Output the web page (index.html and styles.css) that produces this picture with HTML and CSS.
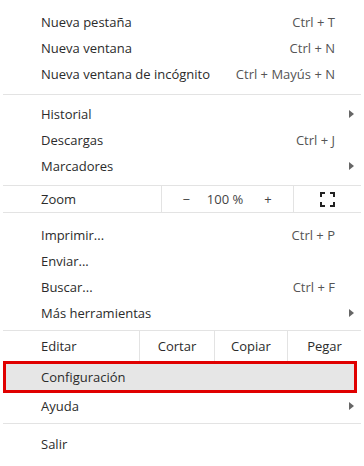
FILE: index.html
```html
<!DOCTYPE html>
<html lang="es">
<head>
<meta charset="utf-8">
<link rel="stylesheet" href="styles.css">
</head>
<body>
<div class="menu">
  <div class="group g1">
    <div class="item"><span class="label">Nueva pestaña</span><span class="key">Ctrl + T</span></div>
    <div class="item"><span class="label">Nueva ventana</span><span class="key">Ctrl + N</span></div>
    <div class="item"><span class="label">Nueva ventana de incógnito</span><span class="key">Ctrl + Mayús + N</span></div>
  </div>
  <div class="sep s1"></div>
  <div class="group">
    <div class="item"><span class="label">Historial</span><span class="arrow"></span></div>
    <div class="item"><span class="label">Descargas</span><span class="key">Ctrl + J</span></div>
    <div class="item"><span class="label">Marcadores</span><span class="arrow"></span></div>
  </div>
  <div class="zoomrow">
    <span class="label zl">Zoom</span>
    <div class="zctrl">
      <span class="zminus">−</span>
      <span class="zval">100 %</span>
      <span class="zplus">+</span>
    </div>
    <div class="zfull">
      <svg width="15" height="15" viewBox="0 0 15 15" fill="none" stroke="#222" stroke-width="2">
        <path d="M1 5V1h4"/><path d="M10 1h4v4"/><path d="M14 10v4h-4"/><path d="M5 14H1v-4"/>
      </svg>
    </div>
  </div>
  <div class="group g3">
    <div class="item"><span class="label">Imprimir...</span><span class="key">Ctrl + P</span></div>
    <div class="item"><span class="label">Enviar...</span></div>
    <div class="item"><span class="label">Buscar...</span><span class="key">Ctrl + F</span></div>
    <div class="item"><span class="label">Más herramientas</span><span class="arrow"></span></div>
  </div>
  <div class="editrow">
    <span class="label el">Editar</span>
    <span class="ebtn b1">Cortar</span>
    <span class="ebtn b2">Copiar</span>
    <span class="ebtn b3">Pegar</span>
  </div>
  <div class="item hl"><span class="label">Configuración</span></div>
  <div class="item"><span class="label">Ayuda</span><span class="arrow"></span></div>
  <div class="sep s2"></div>
  <div class="item"><span class="label">Salir</span></div>
</div>
</body>
</html>
```
FILE: styles.css
```css
html, body {
  margin: 0;
  padding: 0;
  background: #ffffff;
}
body {
  font-family: "Open Sans", "Noto Sans", "Liberation Sans", sans-serif;
  font-size: 13px;
  color: #2b2b2b;
}
.menu {
  width: 364px;
  height: 466px;
  padding-top: 9px;
  box-sizing: border-box;
  overflow: hidden;
}
.item {
  height: 26px;
  display: flex;
  align-items: center;
  padding-left: 41px;
  padding-right: 29px;
  position: relative;
}
.label {
  flex: 1;
  white-space: nowrap;
}
.key {
  color: #555;
  white-space: nowrap;
}
.arrow {
  position: absolute;
  right: 10px;
  top: 9px;
  width: 0;
  height: 0;
  border-top: 4px solid transparent;
  border-bottom: 4px solid transparent;
  border-left: 5px solid #666;
}
.sep {
  height: 1px;
  background: #e3e3e3;
  margin-left: 3px;
  margin-right: 3px;
}
.s1 { margin-top: 7px; margin-bottom: 6px; }
.s2 { margin-top: 4px; margin-bottom: 7px; }
.zoomrow {
  margin-top: 6px;
  height: 26px;
  border-top: 1px solid #e3e3e3;
  border-bottom: 1px solid #e3e3e3;
  margin-left: 3px;
  margin-right: 3px;
  display: flex;
  align-items: stretch;
}
.zl {
  width: 158px;
  flex: none;
  box-sizing: border-box;
  padding-left: 38px;
  display: flex;
  align-items: center;
}
.zctrl {
  width: 131px;
  flex: none;
  border-left: 1px solid #e3e3e3;
  border-right: 1px solid #e3e3e3;
  display: flex;
  align-items: center;
  color: #444;
}
.zminus { width: 28px; text-align: right; }
.zval { width: 70px; text-align: center; }
.zplus { width: 16px; text-align: center; }
.zfull {
  flex: 1;
  display: flex;
  align-items: center;
  justify-content: center;
}
.g3 { margin-top: 9px; }
.editrow {
  margin-top: 4px;
  height: 30px;
  border-top: 1px solid #e3e3e3;
  margin-left: 3px;
  margin-right: 3px;
  display: flex;
  align-items: stretch;
}
.el {
  width: 136px;
  flex: none;
  padding-left: 38px;
  box-sizing: border-box;
  display: flex;
  align-items: center;
}
.ebtn {
  border-left: 1px solid #e3e3e3;
  display: flex;
  align-items: center;
  justify-content: center;
}
.b1 { width: 74px; }
.b2 { width: 72px; }
.b3 { flex: 1; }
.hl {
  height: 32px;
  box-sizing: border-box;
  margin-left: 3px;
  margin-right: 7px;
  padding-left: 35px;
  background: #e6e6e6;
  border: 3px solid #e00000;
}
```
